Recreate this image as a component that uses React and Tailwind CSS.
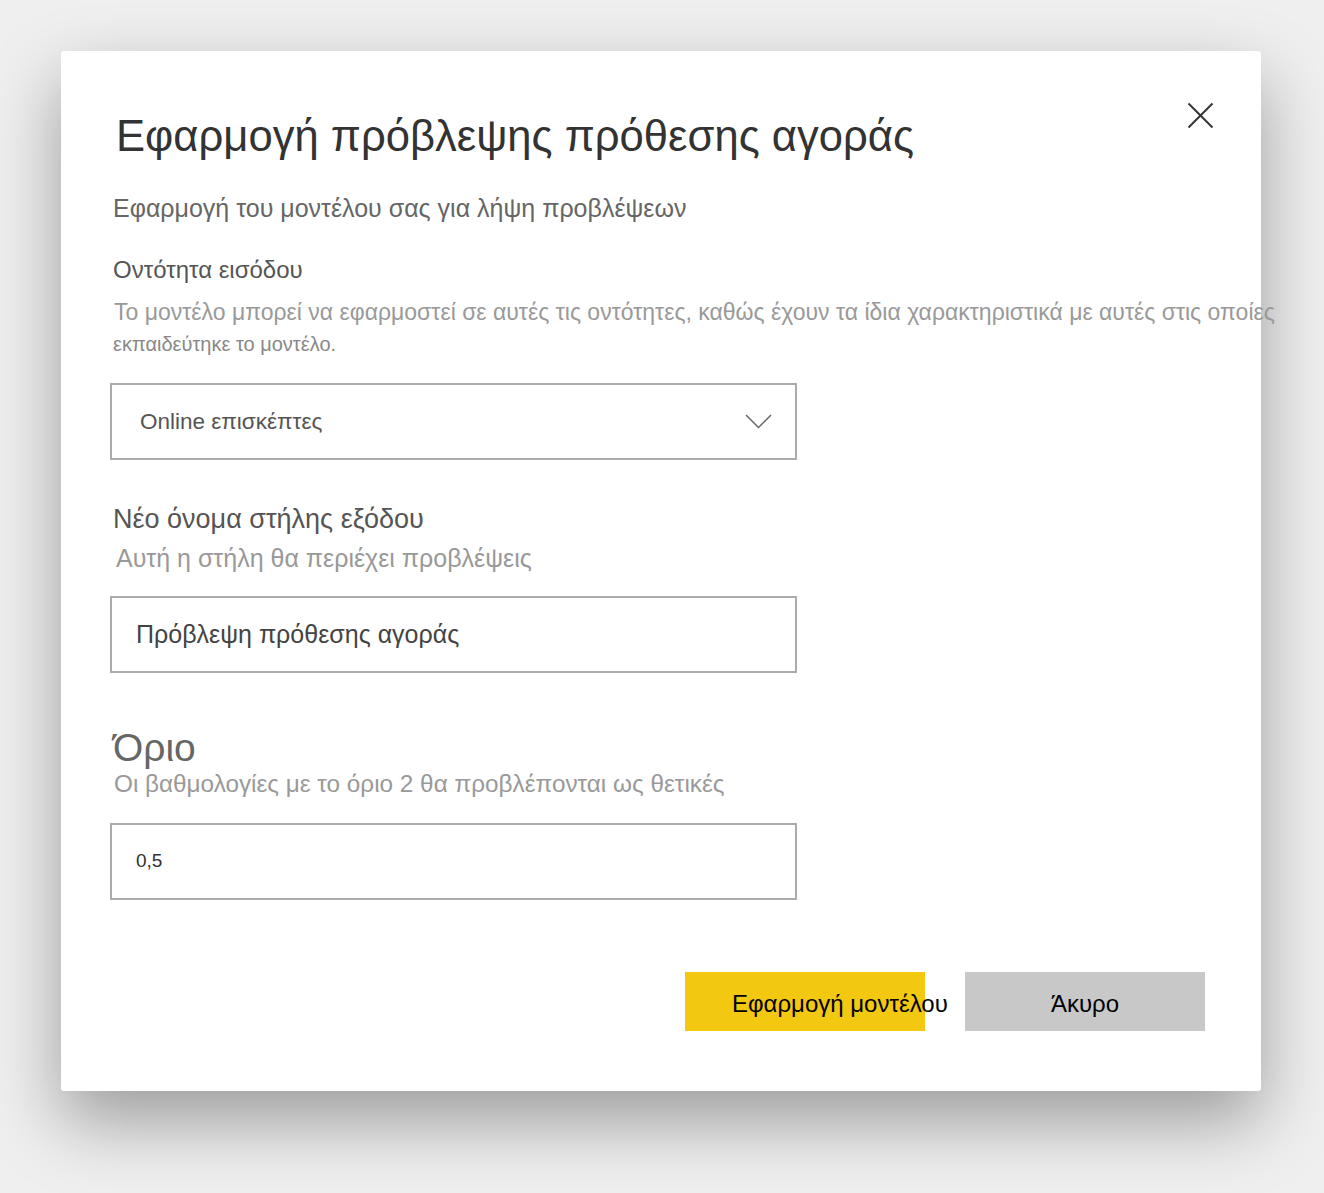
function Field({ children, className = '' }) {
  return (
    <div className={`w-[687px] h-[77px] border-2 border-[#ababab] bg-white flex items-center ${className}`}>
      {children}
    </div>
  )
}

export default function App() {
  return (
    <div className="min-h-screen w-full bg-[#efefef] pt-[51px] pl-[61px] font-['Liberation_Sans',Arial,sans-serif]">
      <div className="relative w-[1200px] h-[1040px] bg-white rounded-[3px] shadow-[0_30px_70px_rgba(0,0,0,0.35)] pl-[49px]">
        <button className="absolute top-[51px] left-[1126px] w-[27px] h-[27px]">
          <svg width="27" height="27" viewBox="0 0 27 27" fill="none" stroke="#333" strokeWidth="2">
            <line x1="1.5" y1="1.5" x2="25.5" y2="25.5" />
            <line x1="25.5" y1="1.5" x2="1.5" y2="25.5" />
          </svg>
        </button>

        <h1 className="pt-[57px] pl-[6px] text-[43.6px] leading-[56px] text-[#333] whitespace-nowrap">
          Εφαρμογή πρόβλεψης πρόθεσης αγοράς
        </h1>
        <p className="mt-[28px] pl-[3px] text-[25px] leading-[32px] text-[#666] whitespace-nowrap">
          Εφαρμογή του μοντέλου σας για λήψη προβλέψεων
        </p>

        <p className="mt-[30px] pl-[3px] text-[24px] leading-[32px] text-[#555] whitespace-nowrap">
          Οντότητα εισόδου
        </p>
        <p className="mt-[11px] pl-[4px] text-[23px] leading-[30px] text-[#999] whitespace-nowrap">
          Το μοντέλο μπορεί να εφαρμοστεί σε αυτές τις οντότητες, καθώς έχουν τα ίδια χαρακτηριστικά με αυτές στις οποίες
        </p>
        <p className="mt-[4px] pl-[3px] text-[20px] leading-[26px] text-[#888] whitespace-nowrap">
          εκπαιδεύτηκε το μοντέλο.
        </p>

        <Field className="mt-[26px] pl-[28px] pr-[23px] justify-between">
          <span className="text-[22.5px] text-[#555]">Online επισκέπτες</span>
          <svg width="27" height="15" viewBox="0 0 27 15" fill="none" stroke="#666" strokeWidth="1.5">
            <polyline points="1,1 13.5,13.5 26,1" />
          </svg>
        </Field>

        <p className="mt-[41px] pl-[3px] text-[27px] leading-[36px] text-[#555] whitespace-nowrap">
          Νέο όνομα στήλης εξόδου
        </p>
        <p className="mt-[5px] pl-[6px] text-[25px] leading-[32px] text-[#999] whitespace-nowrap">
          Αυτή η στήλη θα περιέχει προβλέψεις
        </p>

        <Field className="mt-[22px] pl-[24px]">
          <span className="text-[25px] text-[#444]">Πρόβλεψη πρόθεσης αγοράς</span>
        </Field>

        <p className="mt-[55px] pl-[3px] text-[39px] leading-[40px] text-[#666] whitespace-nowrap">
          Όριο
        </p>
        <p className="pl-[4px] text-[24.3px] leading-[32px] text-[#999] whitespace-nowrap">
          Οι βαθμολογίες με το όριο 2 θα προβλέπονται ως θετικές
        </p>

        <Field className="mt-[23px] pl-[24px]">
          <span className="text-[19px] text-[#333]">0,5</span>
        </Field>

        <div className="absolute left-[624px] top-[921px] flex gap-[40px]">
          <button className="w-[240px] h-[59px] pt-[4px] bg-[#f2c811] text-black text-[24px] pl-[47px] text-left whitespace-nowrap overflow-visible">
            Εφαρμογή μοντέλου
          </button>
          <button className="w-[240px] h-[59px] pt-[4px] bg-[#c8c8c8] text-black text-[24px]">
            Άκυρο
          </button>
        </div>
      </div>
    </div>
  )
}
